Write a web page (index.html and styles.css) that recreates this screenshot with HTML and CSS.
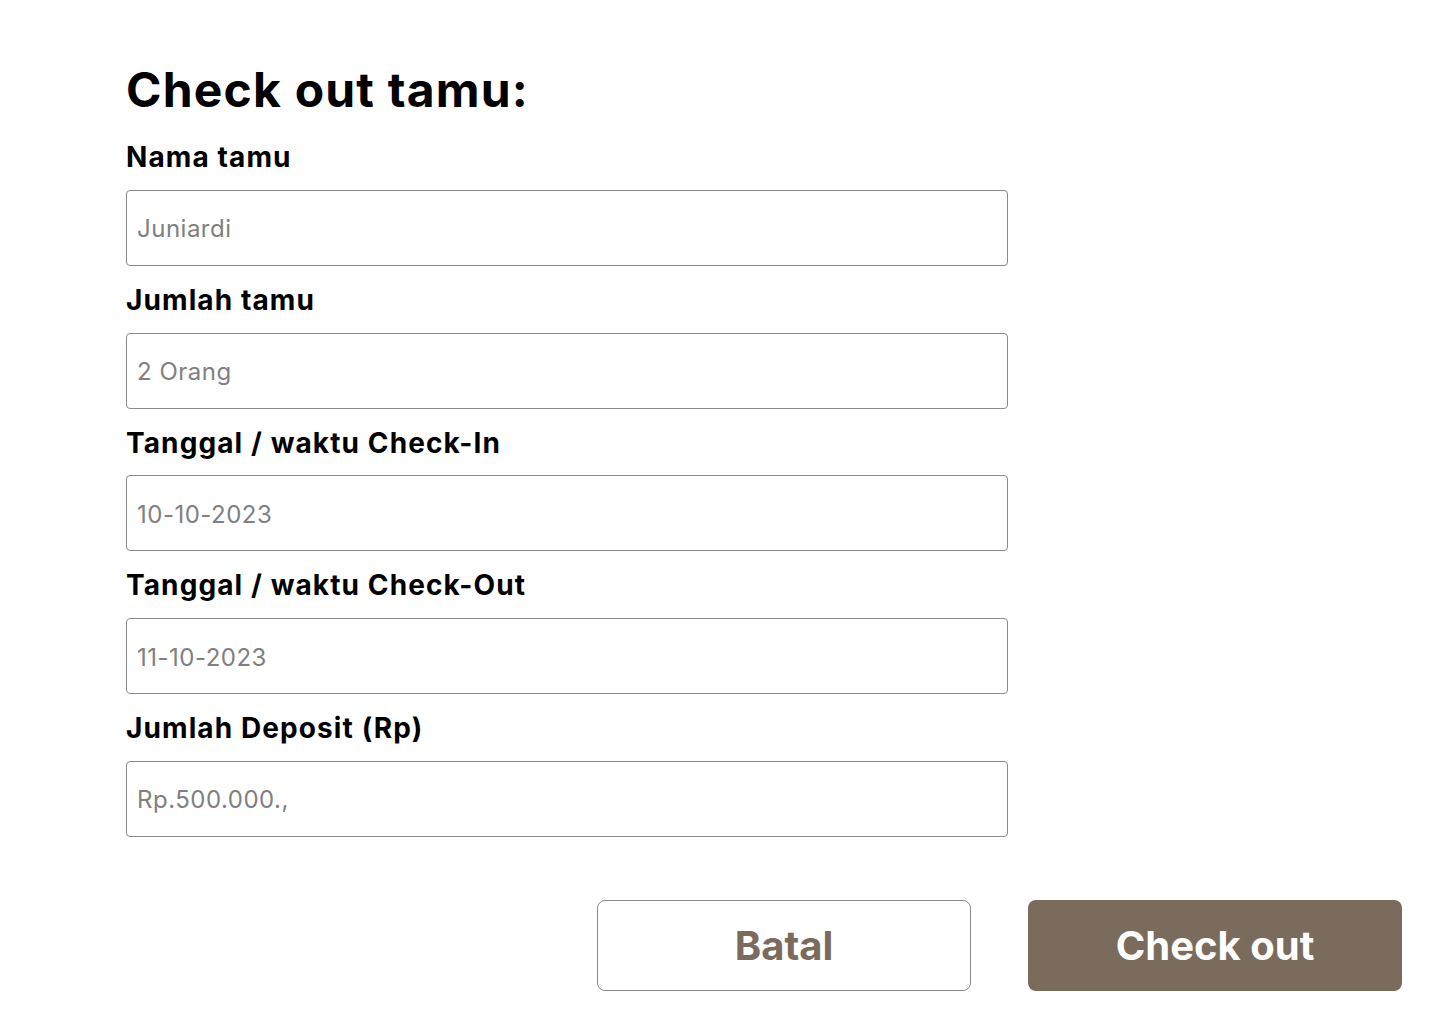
FILE: index.html
```html
<!DOCTYPE html>
<html lang="id">
<head>
<meta charset="utf-8">
<title>Check out tamu</title>
<link rel="stylesheet" href="styles.css">
</head>
<body>
<main class="page">
  <h1 class="title">Check out tamu:</h1>
  <form class="form">
    <div class="field">
      <label class="label" for="nama">Nama tamu</label>
      <input class="input" id="nama" type="text" placeholder="Juniardi">
    </div>
    <div class="field">
      <label class="label" for="jumlah">Jumlah tamu</label>
      <input class="input" id="jumlah" type="text" placeholder="2 Orang">
    </div>
    <div class="field">
      <label class="label" for="checkin">Tanggal / waktu Check-In</label>
      <input class="input" id="checkin" type="text" placeholder="10-10-2023">
    </div>
    <div class="field">
      <label class="label" for="checkout">Tanggal / waktu Check-Out</label>
      <input class="input" id="checkout" type="text" placeholder="11-10-2023">
    </div>
    <div class="field">
      <label class="label" for="deposit">Jumlah Deposit (Rp)</label>
      <input class="input" id="deposit" type="text" placeholder="Rp.500.000.,">
    </div>
  </form>
  <div class="actions">
    <button class="btn btn-outline" type="button">Batal</button>
    <button class="btn btn-primary" type="button">Check out</button>
  </div>
</main>
</body>
</html>
```

FILE: styles.css
```css
* { box-sizing: border-box; }
html, body { margin: 0; padding: 0; background: #ffffff; }
body {
  font-family: Inter, "Noto Sans", "Liberation Sans", sans-serif;
  color: #000000;
}
.page {
  width: 1276px;
  margin-left: 126px;
  padding-top: 61px;
}
.title {
  margin: 0;
  font-size: 48px;
  font-weight: 700;
  line-height: 58px;
  letter-spacing: 1.2px;
}
.form {
  width: 882px;
  display: flex;
  flex-direction: column;
  gap: 16px;
  margin-top: 20px;
}
.field {
  display: flex;
  flex-direction: column;
  gap: 15px;
}
.label {
  padding-top: 1px;
  font-size: 28px;
  font-weight: 700;
  line-height: 34.75px;
  letter-spacing: 1.1px;
}
.input {
  width: 882px;
  height: 76px;
  border: 1px solid #8a8a8a;
  border-radius: 4px;
  padding: 2px 10px 0;
  font-family: inherit;
  font-size: 24px;
  letter-spacing: 0.5px;
  color: #333;
  background: #fff;
  outline: none;
}
.input::placeholder { color: #808080; }
.actions {
  display: flex;
  justify-content: flex-end;
  gap: 57px;
  margin-top: 63px;
}
.btn {
  width: 374px;
  height: 91px;
  border-radius: 8px;
  padding-top: 2px;
  font-family: inherit;
  font-size: 40px;
  font-weight: 700;
  cursor: pointer;
}
.btn-outline {
  background: #ffffff;
  border: 1px solid #8a8a8a;
  color: #7a6b5d;
}
.btn-primary {
  background: #7a6b5d;
  border: none;
  color: #ffffff;
}
```
